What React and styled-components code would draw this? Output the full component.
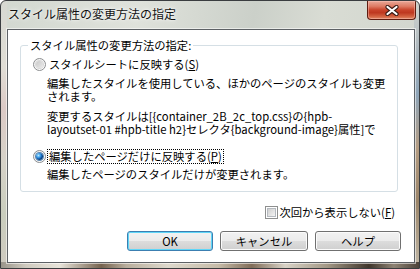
import React from 'react';
import styled, { createGlobalStyle } from 'styled-components';

const FONT = `"Noto Sans CJK JP", "Noto Sans", sans-serif`;

const GlobalStyle = createGlobalStyle`
  html, body { margin: 0; padding: 0; background: #fff; overflow: hidden; }
  * { box-sizing: border-box; }
`;

const Window = styled.div`
  width: 420px;
  height: 269px;
  display: flex;
  flex-direction: column;
  border: 1px solid #3a3d40;
  border-radius: 6px 6px 0 0;
  overflow: hidden;
  font-family: ${FONT};
  background:
    linear-gradient(90deg, #9a958b 0%, #cfcabf 6%, #e8e4da 14%, #76634f 24%, #b9ae9d 30%, #ddd8cc 40%, #c6bba8 52%, #816d59 60%, #d8d2c6 68%, #a39886 78%, #3f352b 88%, #8e8374 94%, #4c4239 100%) left bottom / 100% 6px no-repeat,
    linear-gradient(180deg, #d2d6cf 0%, #aab5bd 20%, #8ea5b9 35%, #b59d83 55%, #9b8569 75%, #c1b8a7 100%) right top / 5px 100% no-repeat,
    linear-gradient(180deg, #d7d9d2 0%, #e0ddd5 25%, #dccac6 40%, #d6d2c8 60%, #c9cdbd 80%, #cfcac0 100%) left top / 6px 100% no-repeat,
    linear-gradient(100deg, #d2d8d0 0%, #dfe2db 30%, #cbd0c9 55%, #d9dcd4 70%, #cfd4cc 100%);
`;

const TitleBar = styled.div`
  height: 28px;
  flex: none;
  display: flex;
  align-items: flex-start;
`;

const TitleText = styled.div`
  margin: 4px 0 0 7px;
  font-size: 12px;
  line-height: 18px;
  color: #111;
  white-space: nowrap;
  text-shadow: 0 0 5px rgba(255, 255, 255, 0.95), 0 0 2px rgba(255, 255, 255, 0.9);
`;

const CloseButton = styled.div`
  margin-left: auto;
  margin-right: 3px;
  width: 49px;
  height: 19px;
  display: flex;
  align-items: center;
  justify-content: center;
  border: 1px solid #5e1c10;
  border-top: none;
  border-radius: 0 0 4px 4px;
  background: linear-gradient(180deg, #e9a898 0%, #dd7a63 30%, #c8432a 50%, #be3820 65%, #d2603f 85%, #e08a68 100%);
  box-shadow: inset 0 0 0 1px rgba(255, 200, 190, 0.45);
`;

const Client = styled.div`
  flex: 1;
  margin: 0 4px 5px 6px;
  background: #fff;
  border: 1px solid #5d6165;
  box-shadow: 0 0 0 1px rgba(255, 255, 255, 0.55);
  display: flex;
  flex-direction: column;
  padding: 0 0 10px 12px;
  font-size: 11.3px;
  line-height: 13px;
  color: #000;
`;

const GroupBox = styled.div`
  margin: 15px 16px 0 0;
  border: 1px solid #d5dfe5;
  border-radius: 3px;
  display: flex;
  flex-direction: column;
  align-items: flex-start;
  padding: 0 0 10px 12px;
`;

const Legend = styled.div`
  margin: -7px 0 0 -5px;
  padding: 0 2px;
  height: 13px;
  background: #fff;
  white-space: nowrap;
`;

const RadioRow = styled.div`
  display: flex;
  align-items: center;
  height: 13px;
  margin-top: ${p => p.$top}px;
  white-space: nowrap;
`;

const RadioOuter = styled.span`
  flex: none;
  width: 13px;
  height: 13px;
  border-radius: 50%;
  border: 1px solid #8b8d8f;
  background: linear-gradient(135deg, #f0f0f0, #fdfdfd);
  display: flex;
  align-items: center;
  justify-content: center;
  margin-right: 2px;
`;

const RadioDot = styled.span`
  width: 7px;
  height: 7px;
  border-radius: 50%;
  background: ${p =>
    p.$checked
      ? 'radial-gradient(circle at 35% 35%, #bfe6ff 0, #55b2f0 1.5px, #1a6fc4 3px, #0d4585 4px)'
      : 'linear-gradient(135deg, #c9c9c9, #e9e9e9)'};
  box-shadow: ${p => (p.$checked ? '0 0 0 1px #5a86b0' : '0 0 0 1px #d8d8d8')};
`;

const Label = styled.span`
  padding: 0 1px;
  height: 13px;
  outline: ${p => (p.$focus ? '1px dotted #000' : 'none')};
  outline-offset: 0;
`;

const Desc = styled.div`
  margin: ${p => p.$top}px 0 0 14px;
  white-space: nowrap;
`;

const U = styled.span`
  text-decoration: underline;
  text-underline-offset: 1px;
`;

const CheckRow = styled.div`
  margin-top: 14px;
  padding-right: 19px;
  display: flex;
  justify-content: flex-end;
  align-items: center;
  height: 13px;
  white-space: nowrap;
`;

const CheckBox = styled.span`
  width: 13px;
  height: 13px;
  border: 1px solid #8e8f8f;
  background: #fff;
  padding: 1px;
  margin-right: 1px;
  display: flex;
  &::after {
    content: '';
    flex: 1;
    border: 1px solid #b5bac0;
    background: linear-gradient(135deg, #cfcfcf, #f4f4f4);
  }
`;

const ButtonRow = styled.div`
  margin-top: 12px;
  margin-right: 13px;
  display: flex;
  justify-content: flex-end;
  gap: 7px;
`;

const Button = styled.div`
  width: ${p => p.$w}px;
  height: 20px;
  display: flex;
  align-items: center;
  justify-content: center;
  border: 1px solid ${p => (p.$default ? '#3c7fb1' : '#707070')};
  border-radius: 3px;
  background: linear-gradient(180deg, #f2f2f2 0%, #ebebeb 50%, #dddddd 50%, #cfcfcf 100%);
  box-shadow: inset 0 0 0 1px ${p => (p.$default ? '#5fd6f8' : '#fbfbfb')};
  font-size: 11.3px;
  color: #000;
  white-space: nowrap;
`;

export default function App() {
  return (
    <>
      <GlobalStyle />
      <Window>
        <TitleBar>
          <TitleText>スタイル属性の変更方法の指定</TitleText>
          <CloseButton>
            <svg width="14" height="11" viewBox="0 0 14 11">
              <path d="M2.5 2 L11.5 9 M11.5 2 L2.5 9" stroke="#3a1c16" strokeWidth="4.2" strokeLinecap="round" fill="none" />
              <path d="M2.5 2 L11.5 9 M11.5 2 L2.5 9" stroke="#ffffff" strokeWidth="2.2" strokeLinecap="round" fill="none" />
            </svg>
          </CloseButton>
        </TitleBar>
        <Client>
          <GroupBox>
            <Legend>スタイル属性の変更方法の指定:</Legend>
            <RadioRow $top={6}>
              <RadioOuter><RadioDot /></RadioOuter>
              <Label>スタイルシートに反映する(<U>S</U>)</Label>
            </RadioRow>
            <Desc $top={6}>
              編集したスタイルを使用している、ほかのページのスタイルも変更<br />
              されます。
            </Desc>
            <Desc $top={7}>
              変更するスタイルは[{'{'}container_2B_2c_top.css{'}'}の{'{'}hpb-<br />
              layoutset-01 #hpb-title h2{'}'}セレクタ{'{'}background-image{'}'}属性]で
            </Desc>
            <RadioRow $top={14}>
              <RadioOuter><RadioDot $checked /></RadioOuter>
              <Label $focus>編集したページだけに反映する(<U>P</U>)</Label>
            </RadioRow>
            <Desc $top={5}>編集したページのスタイルだけが変更されます。</Desc>
          </GroupBox>
          <CheckRow>
            <CheckBox />
            <span>次回から表示しない(<U>F</U>)</span>
          </CheckRow>
          <ButtonRow>
            <Button $w={86} $default>OK</Button>
            <Button $w={88}>キャンセル</Button>
            <Button $w={86}>ヘルプ</Button>
          </ButtonRow>
        </Client>
      </Window>
    </>
  );
}
